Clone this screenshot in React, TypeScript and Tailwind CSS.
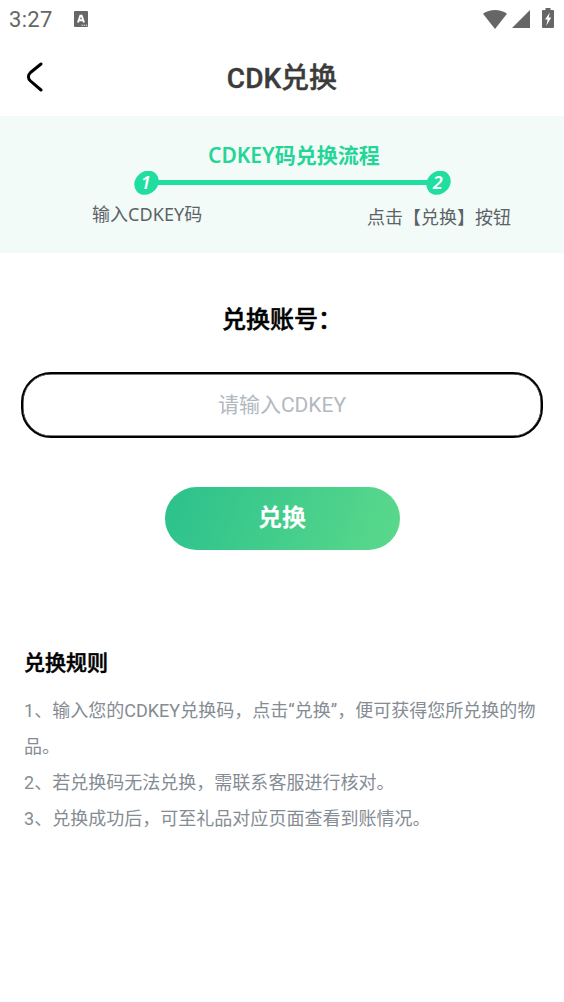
import { useState } from 'react'

const RULES = [
  '1、输入您的CDKEY兑换码，点击“兑换”，便可获得您所兑换的物品。',
  '2、若兑换码无法兑换，需联系客服进行核对。',
  '3、兑换成功后，可至礼品对应页面查看到账情况。',
]

function StatusBar() {
  return (
    <div className="flex h-[38px] items-center pl-[9px] pr-[10px] text-[#666666]">
      <span className="pt-px text-[22px] leading-[38px] tracking-[0.3px]">3:27</span>
      <svg className="ml-[21px]" width="14" height="16" viewBox="0 0 14 16">
        <rect width="14" height="16" rx="1" fill="currentColor" />
        <path d="M4 11.500 6.300 4.700h1.400L10 11.500M4.800 9.300h4.400" fill="none" stroke="#fff" strokeWidth="1.9" />
        <path d="M7.500 14.200h1.200M9.700 14.200h1.200M11.900 14.200h1.200" stroke="#fff" strokeWidth="1" />
      </svg>
      <div className="ml-auto flex items-center">
        <svg width="24" height="19" viewBox="0 0 24 19">
          <path d="M0 3.700C7-1.200 17-1.200 24 3.700L12 19z" fill="currentColor" />
        </svg>
        <svg className="ml-[5px]" width="18" height="18" viewBox="0 0 18 18">
          <path d="M18 0v18H0z" fill="currentColor" />
        </svg>
        <svg className="-mt-[2px] ml-3" width="12" height="20" viewBox="0 0 12 20">
          <path d="M3.500 0h5v2H11a1 1 0 0 1 1 1v16a1 1 0 0 1-1 1H1a1 1 0 0 1-1-1V3a1 1 0 0 1 1-1h2.500z" fill="currentColor" />
          <path d="M7.800 4.500 3 11.500h2.600L4.300 17.800 9.300 9.500H6.700z" fill="#fff" />
        </svg>
      </div>
    </div>
  )
}

function StepBadge({ value }: { value: number }) {
  return (
    <svg width="25" height="24" viewBox="0 0 25 24">
      <ellipse cx="12.500" cy="11.700" rx="13" ry="11.200" transform="rotate(-42 12.500 11.700)" fill="#20dda0" />
      <text
        x="11.700"
        y="18.200"
        textAnchor="middle"
        fill="#fff"
        className="font-['Noto_Sans'] text-[18px] font-semibold italic"
      >
        {value}
      </text>
    </svg>
  )
}

function Steps() {
  return (
    <section className="h-[137px] bg-[#f2fbf8] pt-[26px] font-['Noto_Sans','Noto_Sans_CJK_SC',sans-serif]">
      <h2 className="ml-[208px] text-[21px] leading-[26px] font-semibold whitespace-nowrap text-[#25d597]">
        CDKEY码兑换流程
      </h2>
      <div className="mt-[3px] ml-[134px] flex w-[317px] items-center">
        <StepBadge value={1} />
        <div className="-mx-1 mb-px h-[5px] flex-1 bg-[#20dda0]" />
        <StepBadge value={2} />
      </div>
      <div className="flex justify-between pr-[53px] pl-[92px] text-[18px] leading-[26px] text-[#5d6266]">
        <span className="mt-[6px] tracking-[0.06px]">输入CDKEY码</span>
        <span className="mt-[9px]">点击【兑换】按钮</span>
      </div>
    </section>
  )
}

export default function App() {
  const [code, setCode] = useState('')

  return (
    <main className="min-h-[1002px] bg-white font-[Roboto,'Noto_Sans_CJK_SC',sans-serif]">
      <StatusBar />

      <header className="grid h-[78px] grid-cols-[1fr_auto_1fr] items-center">
        <button type="button" aria-label="返回" className="ml-[26px] justify-self-start">
          <svg width="18" height="30" viewBox="0 0 18 30" fill="none" stroke="#000" strokeWidth="3" strokeLinecap="round">
            <path d="M15 2 4.500 10.500C1.700 13 1.700 16.500 4.500 19L15 28" />
          </svg>
        </button>
        <h1 className="mt-[3px] text-[28px] leading-[40px] font-medium text-[#3b3b3b] [-webkit-text-stroke:0.4px_#3b3b3b]">
          CDK兑换
        </h1>
      </header>

      <Steps />

      <form className="flex flex-col items-center" onSubmit={(e) => e.preventDefault()}>
        <label
          htmlFor="cdkey"
          className="mt-[49px] text-[24px] leading-[36px] font-medium text-black [-webkit-text-stroke:0.5px_#000]"
        >
          兑换账号：
        </label>
        <input
          id="cdkey"
          value={code}
          onChange={(e) => setCode(e.target.value)}
          placeholder="请输入CDKEY"
          className="mt-[34px] h-[66px] w-[522px] rounded-[30px] border-2 border-black text-center text-[21px] shadow-[inset_0_0_0_0.5px_#000] outline-none placeholder:text-[#b2b9bf]"
        />
        <button
          type="submit"
          className="mt-[48.5px] h-[63px] w-[235px] rounded-full bg-linear-[110deg] from-[#2bc18c] to-[#5bd98b] pb-px text-[24px] font-bold text-white"
        >
          兑换
        </button>
      </form>

      <section className="mt-[98.5px] px-6">
        <h3 className="text-[21px] leading-[30px] font-medium text-black [-webkit-text-stroke:0.5px_#000]">兑换规则</h3>
        <div className="mt-[15px] -mr-1 text-[18px] leading-[36px] tracking-[0.02px] text-[#858c93]">
          {RULES.map((rule) => (
            <p key={rule}>{rule}</p>
          ))}
        </div>
      </section>
    </main>
  )
}
